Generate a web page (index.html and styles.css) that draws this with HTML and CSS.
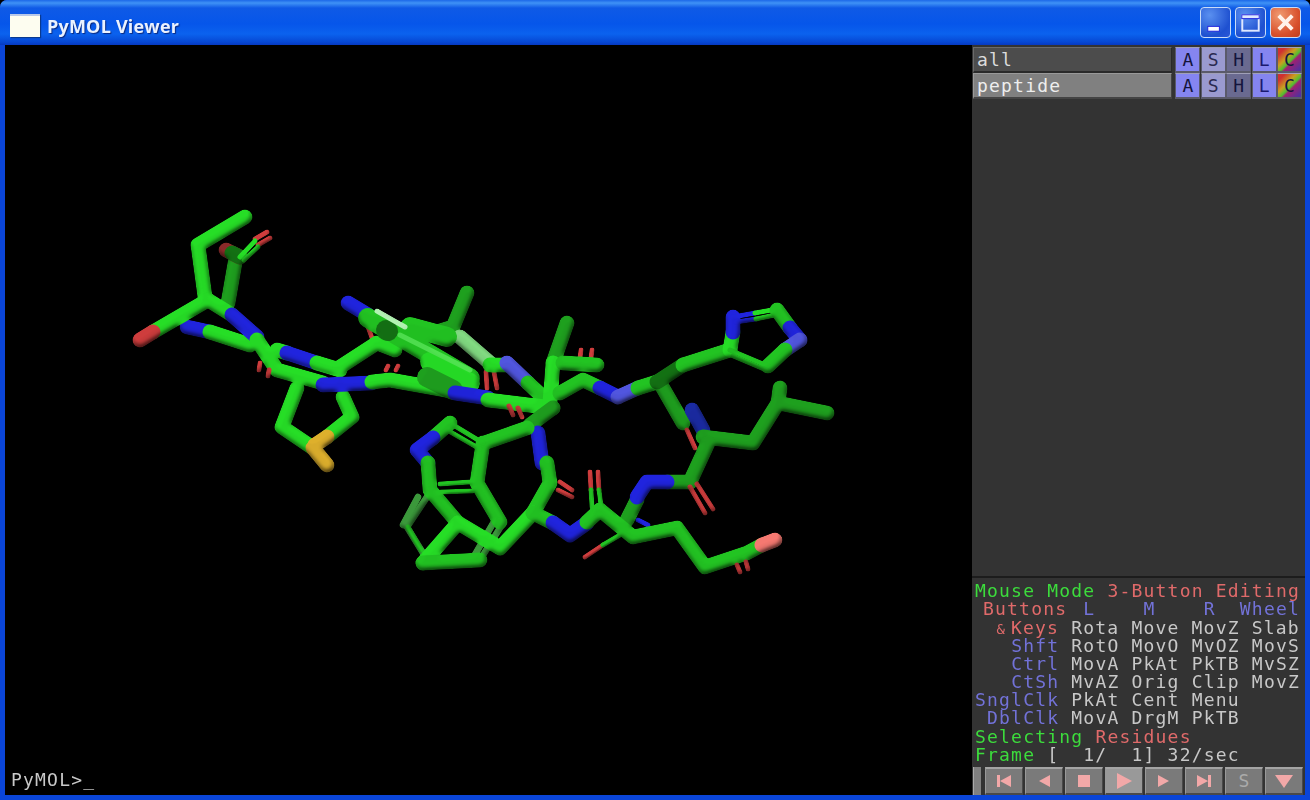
FILE: index.html
```html
<!DOCTYPE html>
<html lang="en">
<head>
<meta charset="utf-8">
<title>PyMOL Viewer</title>
<link rel="stylesheet" href="styles.css">
</head>
<body>
<div class="window">
  <header class="titlebar">
    <span class="appicon"></span>
    <span class="title">PyMOL Viewer</span>
    <div class="winbtns">
      <span class="winbtn blue"><svg viewBox="0 0 30 30" class="glyph"><rect x="7" y="19" width="12" height="5" fill="#fff"/></svg></span>
      <span class="winbtn blue"><svg viewBox="0 0 30 30" class="glyph"><rect x="6.5" y="7.5" width="17" height="16" fill="none" stroke="#dfe8ff" stroke-width="2"/><rect x="6" y="7" width="18" height="4" fill="#dfe8ff"/></svg></span>
      <span class="winbtn red"><svg viewBox="0 0 30 30" class="glyph"><path d="M8 8L22 22M22 8L8 22" stroke="#fff2ea" stroke-width="4" fill="none"/></svg></span>
    </div>
  </header>
  <main class="client">
    <section class="viewer">
      <svg class="mol" viewBox="5 45 967 750">
        <defs>
          <filter id="tube" filterUnits="userSpaceOnUse" x="5" y="45" width="967" height="750" color-interpolation-filters="sRGB">
            <feGaussianBlur in="SourceAlpha" stdDeviation="2.6" result="b"/>
            <feDiffuseLighting in="b" surfaceScale="3" diffuseConstant="1.1" lighting-color="#fff" result="l">
              <feDistantLight azimuth="250" elevation="62"/>
            </feDiffuseLighting>
            <feComposite in="SourceGraphic" in2="l" operator="arithmetic" k1="0.95" k2="0.06" k3="0" k4="0" result="c"/>
            <feComposite in="c" in2="SourceAlpha" operator="in"/>
          </filter>
        </defs>
        <g filter="url(#tube)">
        <!-- rear, dim -->
        <g class="rear dim">
          <polyline points="427,497 407,527 423,553"/>
          <polyline points="418,497 403,525"/>
          <polyline points="480,560 503,523"/>
          <polyline points="473,558 495,520"/>
        </g>
        <g class="stick dark">
          <polyline points="235,263 228,303"/>
          <polyline points="467,293 453,327 427,335"/>
          <polyline points="567,323 553,363"/>
          <polyline points="660,383 683,423"/>
          <polyline points="778,403 780,388"/>
          <polyline points="637,500 627,520"/>
        </g>
        <polyline class="stick deepred" points="240,257 226,250"/>
        <polyline class="stick deepgreen" points="240,257 232,253"/>
        <g class="thin red">
          <polyline points="255,239 267,232"/>
          <polyline points="258,245 270,238"/>
          <polyline points="368,327 372,338"/>
          <polyline points="386,370 388,366"/>
          <polyline points="396,370 398,366"/>
          <polyline points="486,372 487,388"/>
          <polyline points="494,372 497,388"/>
          <polyline points="580,358 581,350"/>
          <polyline points="591,358 592,350"/>
        </g>
        <g class="thin green">
          <polyline points="240,257 255,241"/>
          <polyline points="244,260 258,247"/>
        </g>
        <!-- left chains -->
        <polyline class="stick blue" points="187,327 210,332"/>
        <polyline class="stick green" points="210,332 250,345"/>
        <polyline class="stick green" points="245,217 198,245 205,297"/>
        <polyline class="stick green" points="208,300 153,332"/>
        <polyline class="stick red" points="153,332 140,340"/>
        <polyline class="stick green" points="208,300 232,315"/>
        <polyline class="stick green" points="277,350 287,353"/>
        <polyline class="stick blue" points="287,353 317,363"/>
        <polyline class="stick green" points="317,363 340,370"/>
        <polyline class="stick green" points="340,367 377,343 395,350"/>
        <polyline class="stick green" points="297,388 282,427 313,448"/>
        <polyline class="stick green" points="343,397 352,417 327,437"/>
        <polyline class="stick yellow" points="327,437 315,445"/>
        <polyline class="stick yellow" points="313,448 327,465"/>
        <polyline class="stick blue" points="232,315 257,337"/>
        <polyline class="stick green" points="257,340 277,370 323,383"/>
        <polyline class="stick blue" points="323,385 372,383"/>
        <polyline class="stick green" points="372,382 390,380 457,392"/>
        <g class="thin red">
          <polyline points="260,363 259,370"/>
          <polyline points="269,370 268,376"/>
        </g>
        <!-- stacked rings -->
        <polyline class="stick blue" points="348,303 368,315"/>
        <polyline class="stick pale" points="460,337 490,363"/>
        <polyline class="stick green" points="490,365 507,365"/>
        <polyline class="stick fade" points="507,363 528,383"/>
        <polyline class="stick mid" points="528,383 543,397"/>
        <polyline class="thick mid" points="368,318 470,378"/>
        <polyline class="thick mid" points="410,327 447,337"/>
        <polyline class="thick green" points="430,362 470,383"/>
        <polyline class="thick dark" points="427,377 453,390"/>
        <polyline class="thick deepgreen" points="386,330 388,331"/>
        <polyline class="thin light" points="377,311 405,327"/>
        <polyline class="thin soft" points="400,335 470,370"/>
        <polyline class="stick blue" points="455,393 488,398"/>
        <polyline class="stick green" points="488,400 553,408"/>
        <g class="thin red">
          <polyline points="509,406 513,415"/>
          <polyline points="518,408 522,417"/>
        </g>
        <!-- right upper -->
        <polyline class="stick green" points="553,363 550,403"/>
        <polyline class="stick mid" points="563,363 597,365"/>
        <polyline class="stick mid" points="560,393 583,380 600,388"/>
        <polyline class="stick blue" points="600,388 618,397"/>
        <polyline class="stick fade" points="618,397 638,388"/>
        <polyline class="stick mid" points="638,388 657,382"/>
        <polyline class="stick deepgreen" points="657,382 683,365"/>
        <polyline class="stick mid" points="683,365 730,350"/>
        <polyline class="stick green" points="730,350 733,332"/>
        <polyline class="stick blue" points="733,332 733,317"/>
        <polyline class="thin blue" points="733,317 755,313"/>
        <polyline class="thin blue" points="736,322 756,319"/>
        <polyline class="thin green" points="755,313 777,309"/>
        <polyline class="thin green" points="756,319 775,315"/>
        <polyline class="stick mid" points="777,310 790,328"/>
        <polyline class="stick blue" points="790,328 800,340"/>
        <polyline class="stick fade" points="800,340 785,350"/>
        <polyline class="stick mid" points="785,350 768,366"/>
        <polyline class="thin mid" points="730,350 768,366"/>
        <polyline class="thin mid" points="733,356 766,370"/>
        <polyline class="stick navy" points="692,410 703,430"/>
        <polyline class="thin red" points="687,430 695,448"/>
        <polyline class="stick dark" points="703,437 753,443 778,403 827,413"/>
        <polyline class="stick dark" points="708,443 690,482 668,482"/>
        <polyline class="stick blue" points="667,482 647,482 637,497"/>
        <g class="thin red">
          <polyline points="690,487 705,513"/>
          <polyline points="697,484 713,509"/>
        </g>
        <polyline class="stick dark" points="553,408 530,425"/>
        <polyline class="stick blue" points="538,433 542,463"/>
        <!-- lower -->
        <polyline class="stick mid" points="547,463 550,483 533,513"/>
        <g class="thin red">
          <polyline points="558,490 572,497"/>
          <polyline points="560,482 572,490"/>
        </g>
        <polyline class="stick mid" points="487,442 527,428"/>
        <polyline class="stick mid" points="483,443 477,483 500,522"/>
        <g class="thin mid">
          <polyline points="450,423 483,443"/>
          <polyline points="447,430 480,449"/>
          <polyline points="440,484 470,482"/>
          <polyline points="441,492 472,491"/>
          <polyline points="408,527 421,550"/>
        </g>
        <polyline class="stick mid" points="450,423 433,438"/>
        <polyline class="stick blue" points="433,438 417,450 428,463"/>
        <polyline class="stick mid" points="428,463 430,490 458,523"/>
        <polyline class="stick green" points="533,513 500,548 458,523"/>
        <polyline class="stick green" points="458,523 423,563"/>
        <polyline class="stick mid" points="423,563 480,560"/>
        <polyline class="stick mid" points="533,513 553,523"/>
        <polyline class="stick blue" points="553,523 570,535 587,523"/>
        <polyline class="stick mid" points="587,522 600,510"/>
        <g class="thin red">
          <polyline points="590,472 591,490"/>
          <polyline points="598,472 599,490"/>
          <polyline points="585,557 603,545"/>
        </g>
        <g class="thin mid">
          <polyline points="591,490 592,507"/>
          <polyline points="599,490 601,505"/>
          <polyline points="603,545 620,535"/>
        </g>
        <polyline class="thin blue" points="638,520 648,525"/>
        <polyline class="stick mid" points="600,510 633,537 677,528 705,567 747,553 762,545"/>
        <polyline class="stick pink" points="762,545 775,540"/>
        <g class="thin red">
          <polyline points="737,565 740,572"/>
          <polyline points="746,562 748,569"/>
        </g>
        </g>
      </svg>
      <div class="prompt">PyMOL&gt;_</div>
    </section>
    <aside class="panel">
      <div class="objects">
        <div class="objrow">
          <div class="objname">all</div>
          <span class="tb ta">A</span><span class="tb ts">S</span><span class="tb th">H</span><span class="tb tl">L</span><span class="tb tc">C</span>
        </div>
        <div class="objrow on">
          <div class="objname">peptide</div>
          <span class="tb ta">A</span><span class="tb ts">S</span><span class="tb th">H</span><span class="tb tl">L</span><span class="tb tc">C</span>
        </div>
      </div>
      <div class="info">
        <div class="ln"><span class="g">Mouse Mode</span> <span class="r">3-Button Editing</span></div>
        <div class="ln in"><span class="r">Buttons</span>  <span class="b pull">L    M    R  Wheel</span></div>
        <div class="ln"><span class="r"><span class="amp">&amp;</span>Keys</span> Rota Move MovZ Slab</div>
        <div class="ln">   <span class="b">Shft</span> RotO MovO MvOZ MovS</div>
        <div class="ln">   <span class="b">Ctrl</span> MovA PkAt PkTB MvSZ</div>
        <div class="ln">   <span class="b">CtSh</span> MvAZ Orig Clip MovZ</div>
        <div class="ln"><span class="b">SnglClk</span> PkAt Cent Menu</div>
        <div class="ln"> <span class="b">DblClk</span> MovA DrgM PkTB</div>
        <div class="ln"><span class="g">Selecting</span> <span class="r">Residues</span></div>
        <div class="ln"><span class="g">Frame</span> [  1/  1] 32/sec</div>
      </div>
      <div class="controls">
        <span class="handle"></span>
        <span class="cb"><svg class="ci" viewBox="0 0 24 20"><path d="M5 4h3v12H5zM19 4v12L8 10z"/></svg></span>
        <span class="cb"><svg class="ci" viewBox="0 0 24 20"><path d="M18 4v12L7 10z"/></svg></span>
        <span class="cb"><svg class="ci" viewBox="0 0 24 20"><path d="M6 4h12v12H6z"/></svg></span>
        <span class="cb on"><svg class="ci" viewBox="0 0 24 20"><path d="M5 2v16l15-8z"/></svg></span>
        <span class="cb"><svg class="ci" viewBox="0 0 24 20"><path d="M6 4v12l11-6z"/></svg></span>
        <span class="cb"><svg class="ci" viewBox="0 0 24 20"><path d="M5 4v12l11-6zM16 4h3v12h-3z"/></svg></span>
        <span class="cb stext">S</span>
        <span class="cb"><svg class="ci" viewBox="0 0 24 20"><path d="M3 4h18l-9 13z"/></svg></span>
      </div>
    </aside>
  </main>
</div>
</body>
</html>
```
FILE: styles.css
```css
html, body {
  margin: 0;
  padding: 0;
  background: #000;
}
.window {
  width: 1310px;
  height: 800px;
  display: flex;
  flex-direction: column;
  background: #0a45d8;
  border-radius: 7px 7px 0 0;
  overflow: hidden;
}
.titlebar {
  height: 45px;
  flex: none;
  box-sizing: border-box;
  display: flex;
  align-items: center;
  padding: 6px 9px 0 10px;
  background: linear-gradient(#1c68e8 0, #3f92f6 3px, #0f5ae6 8px, #0656ea 24px, #0b62ee 34px, #0648d4 42px, #0639c0 45px);
}
.appicon {
  width: 30px;
  height: 21px;
  background: #fdfdf0;
  border-top: 2px solid #b8c8e8;
  box-shadow: 1px 1px 1px #0a3a90;
}
.title {
  margin-left: 7px;
  font: bold 18px "Open Sans", "Liberation Sans", sans-serif;
  letter-spacing: .2px;
  color: #eaf2ff;
  text-shadow: 1px 1px 1px #0a2a80;
  filter: blur(.3px);
}
.winbtns {
  margin-left: auto;
  margin-top: -6px;
  display: flex;
  gap: 4px;
}
.winbtn {
  width: 31px;
  height: 31px;
  box-sizing: border-box;
  border: 1px solid #c8dcf8;
  border-radius: 4px;
}
.winbtn.blue {
  background: radial-gradient(circle at 30% 25%, #5a90f0, #1e50d0 70%, #2a58d8);
}
.winbtn.red {
  background: radial-gradient(circle at 30% 25%, #f09a70, #d8502c 65%, #c03c1c);
}
.glyph {
  display: block;
  width: 100%;
  height: 100%;
}
.client {
  flex: 1;
  min-height: 0;
  display: flex;
  padding: 0 5px 5px 5px;
}
.viewer {
  position: relative;
  width: 967px;
  flex: none;
  background: #000;
}
.mol {
  display: block;
  width: 967px;
  height: 750px;
  filter: blur(.6px);
}
.mol polyline {
  fill: none;
  stroke-linejoin: round;
  stroke-linecap: round;
}
.stick { stroke-width: 15; }
.thick { stroke-width: 20; }
.rear { stroke-width: 7; }
.thin { stroke-width: 5; }
.green { stroke: #26dc26; }
.mid { stroke: #22c222; }
.dark { stroke: #1e9e1e; }
.deepgreen { stroke: #137013; }
.dim { stroke: #3a963a; }
.pale { stroke: #80d880; }
.soft { stroke: #4ee04e; }
.light { stroke: #b0f0b0; }
.blue { stroke: #2024dc; }
.navy { stroke: #1a2aa0; }
.fade { stroke: #5055dd; }
.red { stroke: #cc3c3c; }
.deepred { stroke: #8a2a2a; }
.pink { stroke: #f47870; }
.yellow { stroke: #dcae2c; }
.prompt {
  position: absolute;
  left: 6px;
  bottom: 5px;
  font: 18px/20px "DejaVu Sans Mono", monospace;
  letter-spacing: 1.2px;
  color: #c8c8c8;
  filter: blur(.3px);
}
.panel {
  width: 333px;
  flex: none;
  background: #333;
  display: flex;
  flex-direction: column;
}
.objects {
  flex: 1;
  padding: 2px 3px 0 1px;
  display: flex;
  flex-direction: column;
}
.objrow {
  display: flex;
  height: 26px;
  gap: .5px;
}
.objname {
  width: 200px;
  margin-right: 2.5px;
  box-sizing: border-box;
  padding-left: 3px;
  background: #4c4c4c;
  border: 1px solid #6a6a6a;
  border-right-color: #2a2a2a;
  border-bottom: 2px solid #2a2a2a;
  font: 18px/24px "DejaVu Sans Mono", monospace;
  letter-spacing: 1.2px;
  color: #dcdcdc;
}
.on .objname {
  background: #808080;
  border-color: #999 #444 #444 #999;
  color: #eee;
}
.tb {
  width: 25px;
  box-sizing: border-box;
  border: 1px solid #5a5a6a;
  border-top-color: #a0a0b8;
  border-bottom-width: 2px;
  text-align: center;
  font: 18px/23px "DejaVu Sans Mono", monospace;
  color: #14143c;
}
.ta { background: #8585f0; }
.ts { background: #9a9ad0; color: #2a2a50; }
.th { background: #6a6a90; }
.tl { background: #8585f0; color: #1a1a70; }
.tc { background: linear-gradient(135deg, #d03030 15%, #c8a020 40%, #50c030 55%, #a02070 62%, #5030a0 95%); }
.info {
  flex: none;
  border-top: 2px solid #1c1c1c;
  padding: 4px 0 3px 3px;
  background: #333;
  font: 18px/18.2px "DejaVu Sans Mono", monospace;
  letter-spacing: 1.2px;
  color: #c8c8c8;
  filter: blur(.3px);
}
.ln {
  height: 18.2px;
  white-space: pre;
}
.ln.in { padding-left: 8px; }
.pull { margin-left: -8px; }
.info .g { color: #3cdc3c; }
.info .r { color: #e06a6a; }
.info .b { color: #7272d8; }
.amp {
  display: inline-block;
  width: 36px;
  box-sizing: border-box;
  padding-right: 6px;
  text-align: right;
  font-size: 14px;
  letter-spacing: 0;
}
.controls {
  flex: none;
  display: flex;
  height: 28px;
  padding-right: 2px;
  gap: 2px;
}
.handle {
  width: 9px;
  margin: 0 1px;
  background: #808080;
  border-left: 1px solid #aaa;
  border-right: 1px solid #333;
  box-sizing: border-box;
}
.cb {
  flex: 1;
  display: flex;
  align-items: center;
  justify-content: center;
  background: #7a7a7a;
  border-top: 2px solid #a4a4a4;
  border-left: 1px solid #999;
  border-bottom: 2px solid #4a4a4a;
  border-right: 1px solid #4a4a4a;
  box-sizing: border-box;
  font: 18px/22px "DejaVu Sans Mono", monospace;
  color: #aaa;
}
.cb.on { background: #999; }
.ci {
  width: 24px;
  height: 20px;
  fill: #f2a8a8;
}
```
